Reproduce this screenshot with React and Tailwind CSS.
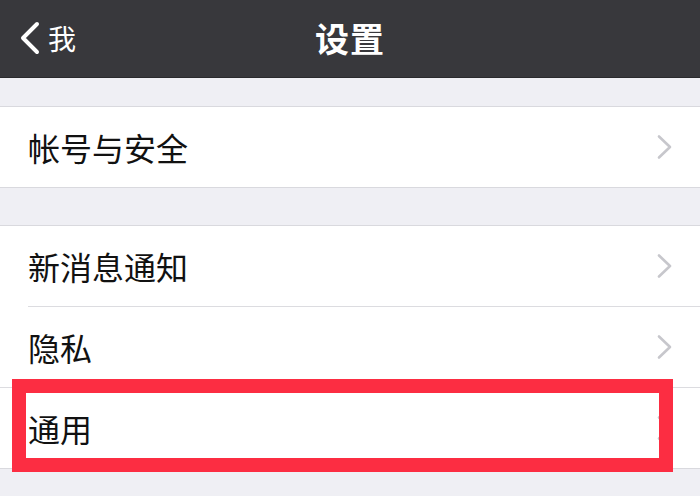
const font = { fontFamily: '"Noto Sans CJK SC", "Noto Sans", sans-serif' };

function Chevron() {
  return (
    <svg width="18" height="26" viewBox="0 0 18 26" className="shrink-0">
      <path d="M3 2.5 L14 13 L3 23.5" fill="none" stroke="#c7c7cc" strokeWidth="2.6" strokeLinecap="round" strokeLinejoin="round" />
    </svg>
  );
}

function Row({ label, children }) {
  return (
    <div className="relative flex h-[80px] items-center bg-white pl-[28px] pr-[26px]">
      <span className="flex-1 text-[32px] leading-none text-[#111]">{label}</span>
      <Chevron />
      {children}
    </div>
  );
}

export default function App() {
  return (
    <div className="h-[496px] w-[700px] overflow-hidden bg-[#efeff4]" style={font}>
      {/* nav bar */}
      <div className="relative flex h-[78px] items-center justify-center border-b border-[#2a2a2d] bg-[#38383c]">
        <div className="absolute left-[18px] top-0 flex h-full items-center gap-[6px] pb-[2px]">
          <svg width="24" height="34" viewBox="0 0 24 34">
            <path d="M19 3 L5 17 L19 31" fill="none" stroke="#fff" strokeWidth="4" strokeLinecap="round" strokeLinejoin="round" />
          </svg>
          <span className="text-[28px] leading-none text-white">我</span>
        </div>
        <span className="pb-[2px] text-[34px] font-bold leading-none tracking-[1px] text-white">设置</span>
      </div>

      <div className="h-[28px]" />
      <div className="border-y border-[#d9d9de]">
        <Row label="帐号与安全" />
      </div>

      <div className="h-[37px]" />
      <div className="border-y border-[#d9d9de] bg-white">
        <Row label="新消息通知" />
        <div className="ml-[28px] h-px bg-[#dcdce0]" />
        <Row label="隐私" />
        <div className="h-px bg-[#dcdce0]" />
        <Row label="通用">
          <div className="absolute left-[12px] top-[-9px] h-[93px] w-[661px] border-[14px] border-[#fc2d42]" />
        </Row>
      </div>
    </div>
  );
}
